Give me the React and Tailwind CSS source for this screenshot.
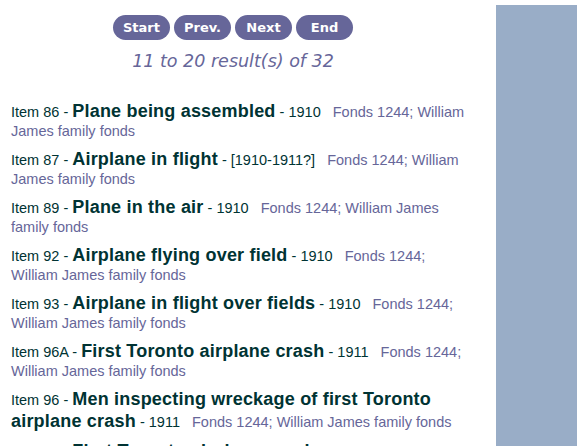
import React from "react";

const items = [
  { num: "86", title: "Plane being assembled", date: "1910" },
  { num: "87", title: "Airplane in flight", date: "[1910-1911?]" },
  { num: "89", title: "Plane in the air", date: "1910" },
  { num: "92", title: "Airplane flying over field", date: "1910" },
  { num: "93", title: "Airplane in flight over fields", date: "1910" },
  { num: "96A", title: "First Toronto airplane crash", date: "1911" },
  { num: "96", title: "Men inspecting wreckage of first Toronto airplane crash", date: "1911" },
  { num: "97", title: "First Toronto airplane crash", date: "1911" },
  { num: "98", title: "Airplane on the ground", date: "1911" },
  { num: "99", title: "Crowd watching airplane", date: "1911" },
];

const NavButton = ({ label }) => (
  <button
    type="button"
    className="h-[25px] w-[57px] rounded-full bg-[#666699] text-[13px] font-bold text-white font-['DejaVu_Sans',Verdana,sans-serif]"
  >
    {label}
  </button>
);

export default function App() {
  return (
    <div className="flex min-h-screen bg-white font-['Liberation_Sans',Arial,sans-serif]">
      {/* Left side: results */}
      <div className="w-[496px] shrink-0">
        <div className="flex w-[466px] flex-col items-center pt-[15px]">
          <div className="flex gap-[4px]">
            <NavButton label="Start" />
            <NavButton label="Prev." />
            <NavButton label="Next" />
            <NavButton label="End" />
          </div>
          <div className="mt-[11px] text-[17.5px] leading-[20px] italic text-[#666699] font-['DejaVu_Sans',Verdana,sans-serif]">
            11 to 20 result(s) of 32
          </div>
        </div>

        <div className="mt-[29px] w-[469px] pl-[11px]">
          {items.map((item) => (
            <div key={item.num} className="mb-[8px] text-[14.5px] leading-[18px] text-[#003333]">
              Item {item.num} -{" "}
              <span className="text-[18px] leading-[22px] font-bold tracking-[0.2px]">{item.title}</span> - {item.date}{" "}
              <span className="ml-[8px] text-[#666699]">Fonds 1244; William James family fonds</span>
            </div>
          ))}
        </div>
      </div>

      {/* Right side panel */}
      <div className="mt-[5px] flex-1 bg-[#99adc7]"></div>
    </div>
  );
}
